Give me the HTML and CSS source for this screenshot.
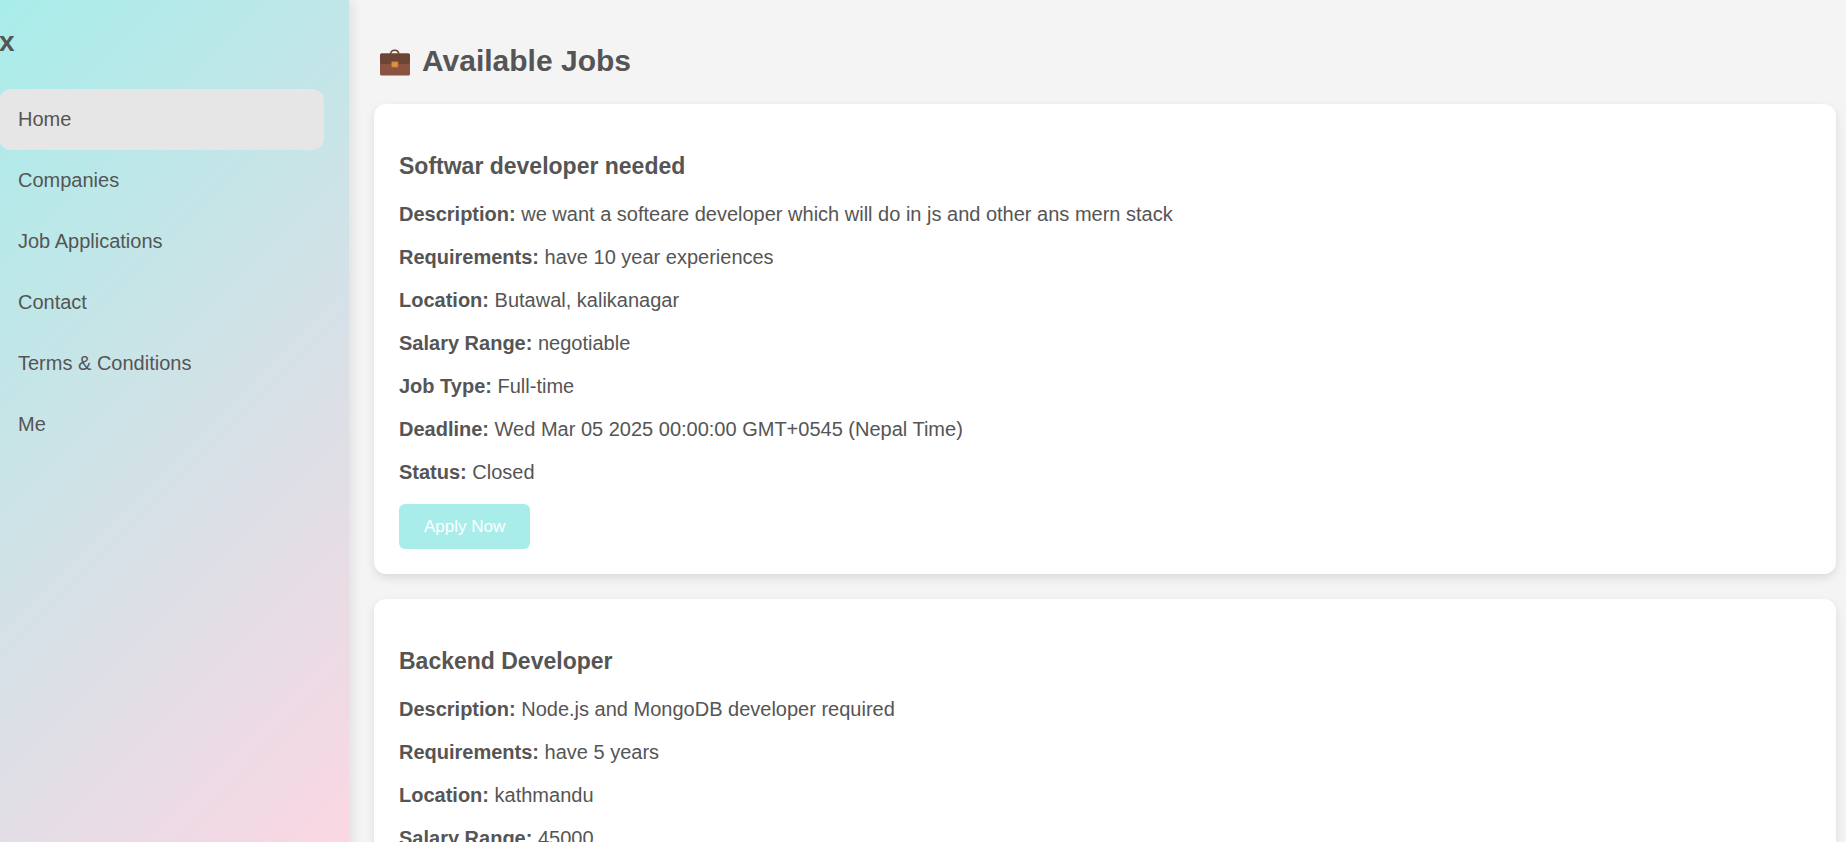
FILE: index.html
```html
<!DOCTYPE html>
<html lang="en">
<head>
<meta charset="utf-8">
<meta name="viewport" content="width=device-width, initial-scale=1">
<title>Available Jobs</title>
<link rel="stylesheet" href="styles.css">
</head>
<body>
<div class="layout">
  <aside class="sidebar">
    <h2 class="brand">x</h2>
    <nav class="menu">
      <a class="menu-link active" href="#home">Home</a>
      <a class="menu-link" href="#companies">Companies</a>
      <a class="menu-link" href="#applications">Job Applications</a>
      <a class="menu-link" href="#contact">Contact</a>
      <a class="menu-link" href="#terms">Terms &amp; Conditions</a>
      <a class="menu-link" href="#me">Me</a>
    </nav>
  </aside>
  <main class="content">
    <h1 class="page-title">
      <svg class="briefcase" viewBox="0 0 30 27" aria-hidden="true">
        <path d="M10.600 5.500C10.600 2.800 12 1.200 14.700 1.200S18.800 2.800 18.800 5.500" fill="none" stroke="#6d4534" stroke-width="1.500"/>
        <rect x="0" y="4.600" width="30" height="22" rx="1.500" fill="#8b5442"/>
        <path d="M1.500 4.600h27a1.500 1.500 0 0 1 1.500 1.500v6.400a2.500 2.500 0 0 1-2.500 2.500h-25A2.500 2.500 0 0 1 0 12.500V6.100a1.500 1.500 0 0 1 1.500-1.500z" fill="#6d4534"/>
        <rect x="11.300" y="12.600" width="7" height="6" rx="1" fill="#c87b31"/>
        <rect x="12.200" y="13.400" width="5.200" height="4.200" fill="#dd9440"/>
      </svg>
      <span>Available Jobs</span>
    </h1>
    <article class="job-card">
      <h3 class="job-title">Softwar developer needed</h3>
      <p><strong>Description:</strong> we want a softeare developer which will do in js and other ans mern stack</p>
      <p><strong>Requirements:</strong> have 10 year experiences</p>
      <p><strong>Location:</strong> Butawal, kalikanagar</p>
      <p><strong>Salary Range:</strong> negotiable</p>
      <p><strong>Job Type:</strong> Full-time</p>
      <p><strong>Deadline:</strong> Wed Mar 05 2025 00:00:00 GMT+0545 (Nepal Time)</p>
      <p><strong>Status:</strong> Closed</p>
      <button class="apply" type="button">Apply Now</button>
    </article>
    <article class="job-card">
      <h3 class="job-title">Backend Developer</h3>
      <p><strong>Description:</strong> Node.js and MongoDB developer required</p>
      <p><strong>Requirements:</strong> have 5 years</p>
      <p><strong>Location:</strong> kathmandu</p>
      <p><strong>Salary Range:</strong> 45000</p>
    </article>
  </main>
</div>
</body>
</html>
```
FILE: styles.css
```css
* {
  box-sizing: border-box;
}

body {
  margin: 0;
  font-family: "Liberation Sans", Arial, sans-serif;
  font-size: 20px;
  line-height: 23px;
  color: #555;
  background: #f4f4f4;
}

.layout {
  display: flex;
  height: 100vh;
  overflow: hidden;
}

.sidebar {
  flex: 0 0 350px;
  height: calc(100vh + 50px);
  margin-left: -1px;
  padding: 25px 25px 25px 0;
  background: linear-gradient(135deg, #a8edea, #fed6e3);
  box-shadow: 2px 0 12px rgba(0, 0, 0, 0.1);
}

.brand {
  margin: 0 0 30px;
  font-size: 28px;
  line-height: 34px;
}

.menu {
  display: flex;
  flex-direction: column;
}

.menu-link {
  padding: 19px;
  border-radius: 12px;
  color: #555;
  text-decoration: none;
}

.menu-link.active {
  background: #e6e6e6;
}

.content {
  flex: 1;
  min-width: 0;
  padding: 25px 10px 0 25px;
}

.page-title {
  display: flex;
  align-items: center;
  gap: 12px;
  margin: 18px 0 26px;
  padding-left: 6px;
  font-size: 30px;
  line-height: 35px;
}

.briefcase {
  width: 30px;
  height: 27px;
  margin-top: 3px;
}

.job-card {
  margin-bottom: 25px;
  padding: 25px;
  background: #fff;
  border-radius: 12px;
  box-shadow: 0 4px 10px rgba(0, 0, 0, 0.1);
}

.job-title {
  margin: 23px 0;
  font-size: 23px;
  line-height: 28px;
}

.job-card p {
  margin: 0 0 20px;
}

.apply {
  display: block;
  padding: 13px 25px;
  border: 0;
  border-radius: 6px;
  background: #a8edea;
  color: #fff;
  font-family: inherit;
  font-size: 17px;
  line-height: 19px;
  cursor: pointer;
}
```
